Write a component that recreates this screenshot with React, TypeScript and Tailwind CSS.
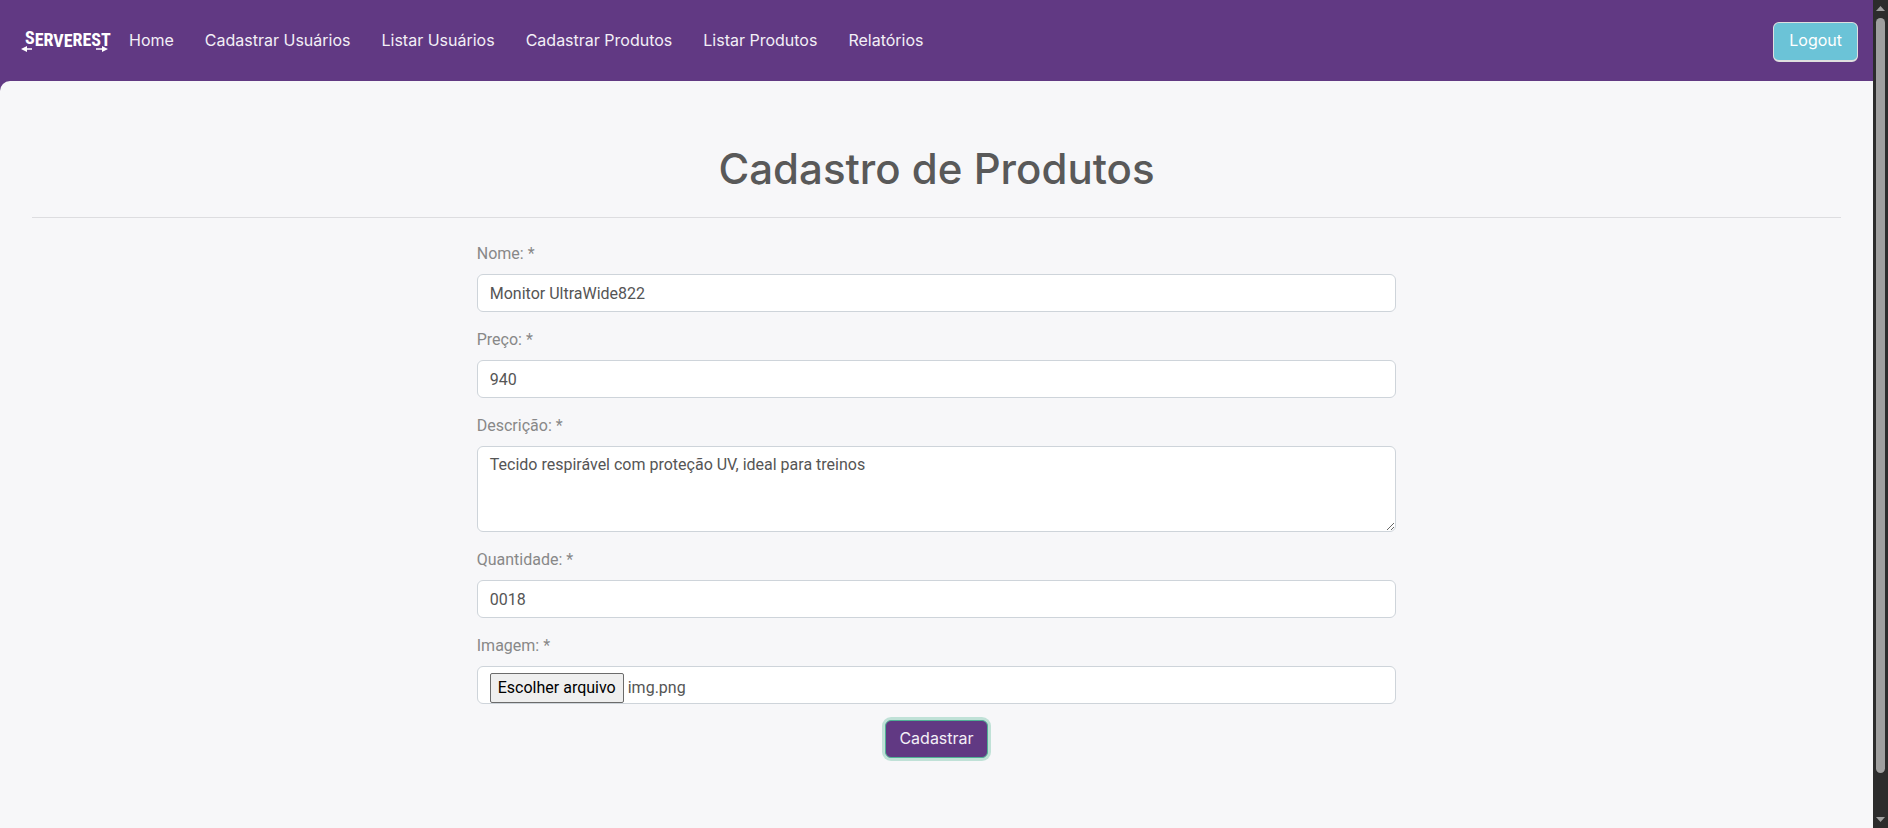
import { useRef, useEffect, useState, type ReactNode } from "react";

const links = [
  "Home",
  "Cadastrar Usuários",
  "Listar Usuários",
  "Cadastrar Produtos",
  "Listar Produtos",
  "Relatórios",
];

const control =
  "block w-full rounded-md border border-[#ced4da] bg-white px-3 text-base leading-6 text-[#555] outline-none";

function Logo() {
  return (
    <svg viewBox="0 -4 90 32" className="h-8 w-[90px] overflow-visible" role="img" aria-label="Serverest">
      <text
        x="5"
        y="15"
        fill="#fff"
        fontFamily="'Roboto Condensed', Roboto, sans-serif"
        fontWeight="700"
        fontSize="18"
      >
        S<tspan dy="2">ER</tspan>
        <tspan dy="1">VE</tspan>
        <tspan dy="-1">REST</tspan>
      </text>
      <path d="M4 20h8M76 20h8" stroke="#fff" strokeWidth="1.500" fill="none" />
      <path d="M1 20l6-3v6zM88 20l-6-3v6z" fill="#fff" />
    </svg>
  );
}

function Field({ id, label, children }: { id: string; label: string; children: ReactNode }) {
  return (
    <div className="mb-4">
      <label htmlFor={id} className="mb-2 block text-base leading-6 text-[#888]">
        {label}
      </label>
      {children}
    </div>
  );
}

function TextInput({ id, value }: { id: string; value: string }) {
  return <input id={id} className={`${control} pt-[7px] pb-[5px]`} defaultValue={value} />;
}

function FilePicker({ id }: { id: string }) {
  const input = useRef<HTMLInputElement>(null);
  const [name, setName] = useState("img.png");
  useEffect(() => {
    const transfer = new DataTransfer();
    transfer.items.add(new File([""], "img.png", { type: "image/png" }));
    if (input.current) input.current.files = transfer.files;
  }, []);
  return (
    <div className="flex h-[38px] items-start gap-1 rounded-md border border-[#ced4da] bg-white px-3 pt-1.5 text-[#555]">
      <input
        ref={input}
        id={id}
        type="file"
        className="sr-only"
        onChange={(e) => setName(e.target.files?.[0]?.name ?? "")}
      />
      <label
        htmlFor={id}
        className="rounded-xs border border-[#6b6b6b] bg-[#efefef] px-[7px] py-0.5 leading-6 text-black"
      >
        Escolher arquivo
      </label>
      <span className="leading-[30px]">{name}</span>
    </div>
  );
}

function Scrollbar() {
  return (
    <div className="flex w-[15px] shrink-0 flex-col items-center bg-[#2c2c2c] py-1.5" aria-hidden="true">
      <svg viewBox="0 0 9 5" className="h-[5px] w-[9px]">
        <path d="M4.500 0L9 5H0z" fill="#9f9f9f" />
      </svg>
      <div className="mt-[7px] mb-11 w-[9px] flex-1 rounded-full bg-[#9f9f9f]" />
      <svg viewBox="0 0 9 5" className="h-[5px] w-[9px]">
        <path d="M0 0h9L4.500 5z" fill="#9f9f9f" />
      </svg>
    </div>
  );
}

export default function App() {
  return (
    <div className="flex h-screen font-[Roboto,sans-serif] text-base">
      <div className="flex min-w-0 flex-1 flex-col bg-[#613983]">
        <header className="flex h-[81px] shrink-0 items-center pr-[15px] pl-5 font-[Inter,sans-serif] text-base text-white">
          <a href="#inicio" className="mr-[19px]">
            <Logo />
          </a>
          <nav className="flex flex-1 items-center gap-[31px] pb-0.5">
            {links.map((text) => (
              <a key={text} href="#pagina" className="whitespace-nowrap text-[#f3eff6]">
                {text}
              </a>
            ))}
          </nav>
          <button
            type="button"
            className="mt-0.5 h-10 rounded-md border border-b-2 border-[#dfdfdf] bg-[#6bc3d7] px-[15px] pb-0.5 leading-6 text-white"
          >
            Logout
          </button>
        </header>
        <main className="flex-1 rounded-tl-[10px] bg-[#f7f7f9] px-[17px] pt-16">
          <h1 className="text-center font-[Inter,sans-serif] text-[42px] leading-[48px] font-medium text-[#595959]">
            Cadastro de Produtos
          </h1>
          <hr className="mx-[15px] my-6 border-[#dddde0]" />
          <form className="mx-auto w-1/2" onSubmit={(e) => e.preventDefault()}>
            <Field id="nome" label="Nome: *">
              <TextInput id="nome" value="Monitor UltraWide822" />
            </Field>
            <Field id="preco" label="Preço: *">
              <TextInput id="preco" value="940" />
            </Field>
            <Field id="descricao" label="Descrição: *">
              <textarea
                id="descricao"
                rows={3}
                className={`${control} py-1.5`}
                defaultValue="Tecido respirável com proteção UV, ideal para treinos"
              />
            </Field>
            <Field id="quantidade" label="Quantidade: *">
              <TextInput id="quantidade" value="0018" />
            </Field>
            <Field id="imagem" label="Imagem: *">
              <FilePicker id="imagem" />
            </Field>
            <button
              type="submit"
              className="mx-auto block rounded-md border border-[#4fb095] bg-[#613983] px-[13px] pt-[5px] pb-[7px] font-[Inter,sans-serif] text-base leading-6 text-[#f3eff6] ring-3 ring-[#c0e1d7]"
            >
              Cadastrar
            </button>
          </form>
        </main>
      </div>
      <Scrollbar />
    </div>
  );
}
